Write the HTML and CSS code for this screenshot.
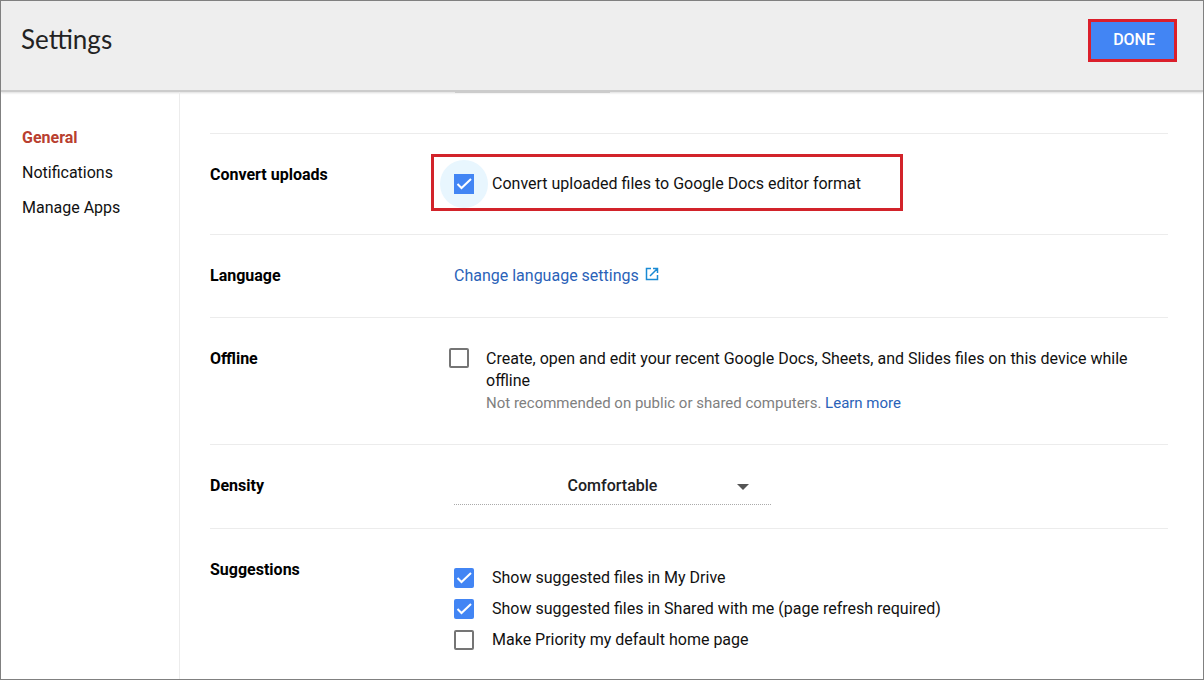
FILE: index.html
```html
<!DOCTYPE html>
<html lang="en">
<head>
<meta charset="utf-8">
<title>Settings</title>
<link rel="stylesheet" href="styles.css">
</head>
<body class="page">
<header class="header">
  <h1 class="title">Settings</h1>
  <button class="done" type="button">DONE</button>
</header>
<div class="layout">
  <nav class="sidebar" aria-label="Settings sections">
    <a class="nav-link nav-active" href="#general">General</a>
    <a class="nav-link" href="#notifications">Notifications</a>
    <a class="nav-link" href="#apps">Manage Apps</a>
  </nav>
  <main class="content" id="general">
    <div class="previous"><div class="previous-edge"></div></div>
    <section class="row">
      <h2 class="label">Convert uploads</h2>
      <div class="control convert">
        <input class="check check-focus" type="checkbox" id="convert" checked>
        <label for="convert">Convert uploaded files to Google Docs editor format</label>
      </div>
    </section>
    <section class="row">
      <h2 class="label">Language</h2>
      <div class="control">
        <a class="link" href="#language">Change language settings<svg class="external" viewBox="0 0 14 14" aria-hidden="true"><path d="M6 1.5H1.5v11h11V8M8 1.5h4.500V6M12.500 1.500L5 9" fill="none" stroke="#1a8ad4" stroke-width="1.500"/></svg></a>
      </div>
    </section>
    <section class="row">
      <h2 class="label">Offline</h2>
      <div class="control offline">
        <input class="check" type="checkbox" id="offline">
        <div>
          <label for="offline">Create, open and edit your recent Google Docs, Sheets, and Slides files on this device while offline</label>
          <p class="note">Not recommended on public or shared computers. <a class="link" href="#learn">Learn more</a></p>
        </div>
      </div>
    </section>
    <section class="row">
      <h2 class="label" id="density-label">Density</h2>
      <div class="control">
        <div class="select-wrap">
          <select class="select" aria-labelledby="density-label">
            <option>Comfortable</option>
            <option>Cozy</option>
            <option>Compact</option>
          </select>
          <svg class="arrow" viewBox="0 0 12 6" aria-hidden="true"><path d="M0 0h12L6 6z" fill="#555"/></svg>
        </div>
      </div>
    </section>
    <section class="row row-last">
      <h2 class="label">Suggestions</h2>
      <div class="control options">
        <div class="option"><input class="check" type="checkbox" id="drive" checked><label for="drive">Show suggested files in My Drive</label></div>
        <div class="option"><input class="check" type="checkbox" id="shared" checked><label for="shared">Show suggested files in Shared with me (page refresh required)</label></div>
        <div class="option"><input class="check" type="checkbox" id="priority"><label for="priority">Make Priority my default home page</label></div>
      </div>
    </section>
  </main>
</div>
</body>
</html>
```
FILE: styles.css
```css
*, *::before, *::after { box-sizing: border-box; }
.page {
  margin: 0;
  min-height: 100vh;
  display: flex;
  flex-direction: column;
  border: 1px solid #808080;
  background: #fff;
  color: #111;
  font: 16px/22px Roboto, sans-serif;
}
.header {
  display: flex;
  justify-content: space-between;
  align-items: flex-start;
  padding: 18px 26px 28px 20px;
  background: #eee;
  border-bottom: 2px solid #ccc;
  box-shadow: 0 1px 2px #ddd;
}
.title {
  margin: 4px 0 0;
  font: 400 26px/32px Lato, sans-serif;
  color: #222;
}
.done {
  padding: 7px 19px 9px 22px;
  border: 3px solid #db1f2b;
  background: #4285f4;
  color: #fff;
  font: 500 16px/21px Roboto, sans-serif;
}
.layout { display: flex; flex: 1; }
.sidebar {
  flex: 0 0 179px;
  display: flex;
  flex-direction: column;
  gap: 13px;
  padding: 35px 21px;
  border-right: 1px solid #ececec;
}
.nav-link { color: #111; text-decoration: none; }
.nav-active { color: #b93f30; font-weight: 700; }
.content { flex: 1; min-width: 0; padding: 0 35px 0 30px; }
.previous { height: 41px; padding-left: 245px; }
.previous-edge { width: 155px; height: 1px; background: #ccc; }
.row {
  display: flex;
  padding: 30px 0;
  border-top: 1px solid #ececec;
}
.row-last { padding-bottom: 20px; }
.label { flex: 0 0 244px; margin: 0; font: inherit; font-weight: 700; color: #000; }
.control { flex: 1; min-width: 0; }
.check {
  appearance: none;
  flex: none;
  width: 20px;
  height: 20px;
  margin: 0;
  border: 2px solid #757575;
  border-radius: 2px;
  background: #fff;
}
.check:checked {
  border: 0;
  background: #4285f4 url("data:image/svg+xml,%3Csvg xmlns='http://www.w3.org/2000/svg' viewBox='0 0 20 20'%3E%3Cpath d='M3.500 10l4 4L17 5' fill='none' stroke='white' stroke-width='2'/%3E%3C/svg%3E") center / 100%;
}
.check-focus:checked { border-radius: 0; }
.convert {
  position: relative;
  z-index: 0;
  display: flex;
  align-items: center;
  gap: 18px;
  min-height: 40px;
}
.convert::before {
  content: "";
  position: absolute;
  z-index: -1;
  top: -4px;
  left: -14px;
  width: 48px;
  height: 48px;
  border-radius: 50%;
  background: #e8f6fe;
}
.convert::after {
  content: "";
  position: absolute;
  top: -10px;
  left: -23px;
  width: 472px;
  height: 57px;
  border: 3px solid #d2232a;
  pointer-events: none;
}
.link { color: #2a62b8; text-decoration: none; }
.external { width: 14px; height: 14px; margin-left: 6px; }
.offline { display: flex; gap: 17px; margin-left: -5px; }
.note { margin: 0; font-size: 15px; color: #808080; }
.select-wrap { position: relative; width: 317px; margin-bottom: -7px; }
.select {
  display: block;
  width: 100%;
  height: 30px;
  padding: 0 32px 8px;
  border: 0;
  border-bottom: 1px dotted #aaa;
  border-radius: 0;
  appearance: none;
  background: none;
  color: #202124;
  font: 500 16px/22px Roboto, sans-serif;
  text-align: center;
  text-align-last: center;
}
.arrow { position: absolute; right: 22px; top: 9px; width: 12px; height: 6px; pointer-events: none; }
.options { display: flex; flex-direction: column; gap: 9px; padding-top: 8px; }
.option { display: flex; align-items: center; gap: 18px; }
```
